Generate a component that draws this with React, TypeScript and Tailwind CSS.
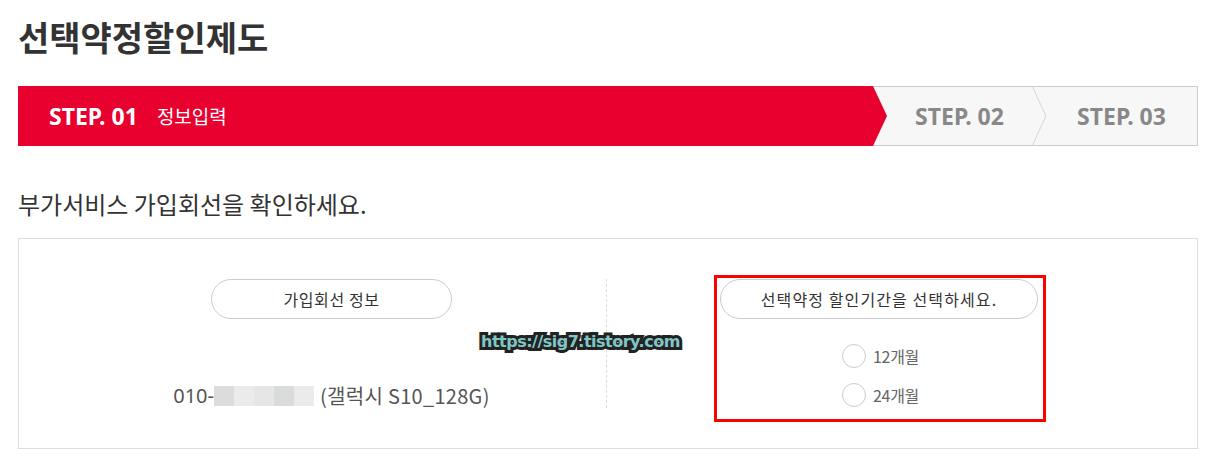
const kr = "font-['Noto_Sans_CJK_KR','Noto_Sans',sans-serif]";
const stepText = "font-['Noto_Sans',sans-serif] text-[23px] font-bold";

function StepBar() {
  return (
    <div className="mx-[18px] flex h-[60px] w-[1180px]">
      <div className="relative z-10 flex w-[869px] shrink-0 items-center bg-[#e8002e] pl-[31px] [clip-path:polygon(0_0,calc(100%-14px)_0,100%_50%,calc(100%-14px)_100%,0_100%)]">
        <span className={`${stepText} text-white`}>STEP. 01</span>
        <span className={`${kr} ml-[19px] text-[19px] text-white`}>정보입력</span>
      </div>
      <div className="-ml-[14px] flex w-[159px] shrink-0 items-center justify-center border-y border-[#cccccc] bg-[#f7f7f7] pl-[14px]">
        <span className={`${stepText} text-[#888888]`}>STEP. 02</span>
      </div>
      <div className="relative flex flex-1 items-center justify-center border-y border-r border-[#cccccc] bg-[#f7f7f7] pl-[14px]">
        <svg className="absolute -top-px left-0" width="16" height="60" viewBox="0 0 16 60">
          <polyline points="0,0 14,30 0,60" fill="none" stroke="#d6d6d6" strokeWidth="1" />
        </svg>
        <span className={`${stepText} text-[#888888]`}>STEP. 03</span>
      </div>
    </div>
  );
}

function Pill({ children, className = "" }: { children: React.ReactNode; className?: string }) {
  return (
    <div className={`${kr} flex h-[40px] items-center justify-center rounded-full border border-[#cccccc] bg-white text-[16px] text-[#333333] ${className}`}>
      {children}
    </div>
  );
}

function Radio({ label }: { label: string }) {
  return (
    <label className="flex items-center gap-[7px]">
      <span className="h-[24px] w-[24px] rounded-full border border-[#cccccc] bg-white" />
      <span className={`${kr} text-[16px] tracking-[-0.3px] text-[#666666]`}>{label}</span>
    </label>
  );
}

const blur = ["bg-[#dcdcdc]", "bg-[#ebebeb]", "bg-[#e6e6e6]", "bg-[#dadcdb]", "bg-[#ebebeb]"];

export default function App() {
  return (
    <div className="relative h-[463px] w-[1211px] overflow-hidden bg-white">
      <h1 className={`${kr} px-[18px] pt-[13px] text-[34px] font-bold leading-[48px] text-[#333333]`}>
        선택약정할인제도
      </h1>
      <div className="mt-[25px]">
        <StepBar />
      </div>
      <p className={`${kr} mt-[40px] px-[18px] text-[24px] leading-[36px] text-[#333333]`}>
        부가서비스 가입회선을 확인하세요.
      </p>

      <div className="mx-[18px] mt-[16px] flex w-[1180px] border border-[#dddddd] pt-[40px] pb-[40px]">
        <div className="flex w-[588px] flex-col items-center border-r border-dashed border-[#dddddd] pl-[38px]">
          <Pill className="w-[241px] tracking-[0.6px]">가입회선 정보</Pill>
          <div className="mt-[65px] flex h-[24px] items-center text-[20px] text-[#555555]">
            <span className="font-['Noto_Sans',sans-serif]">010-</span>
            <span className="flex">
              {blur.map((c, i) => (
                <span key={i} className={`h-[20px] w-[20px] ${c}`} />
              ))}
            </span>
            <span className={`${kr} ml-[6px] tracking-[0.3px]`}>(갤럭시 S10_128G)</span>
          </div>
        </div>
        <div className="flex w-[544px] flex-col items-center">
          <Pill className="w-[318px] tracking-[1.1px]">선택약정 할인기간을 선택하세요.</Pill>
          <div className="mt-[25px] flex flex-col gap-[15px] pl-[3px]">
            <Radio label="12개월" />
            <Radio label="24개월" />
          </div>
        </div>
      </div>

      <div className="pointer-events-none absolute left-[714px] top-[275px] h-[147px] w-[332px] border-[3px] border-[#ff0000]" />
      <div className="pointer-events-none absolute left-[481px] top-[330px] font-['DejaVu_Sans',sans-serif] text-[16px] font-bold leading-[24px] tracking-[-0.5px] text-[#80c6c6] [-webkit-text-stroke:6px_#222222] [paint-order:stroke_fill]">
        https://sig7.tistory.com
      </div>
    </div>
  );
}
